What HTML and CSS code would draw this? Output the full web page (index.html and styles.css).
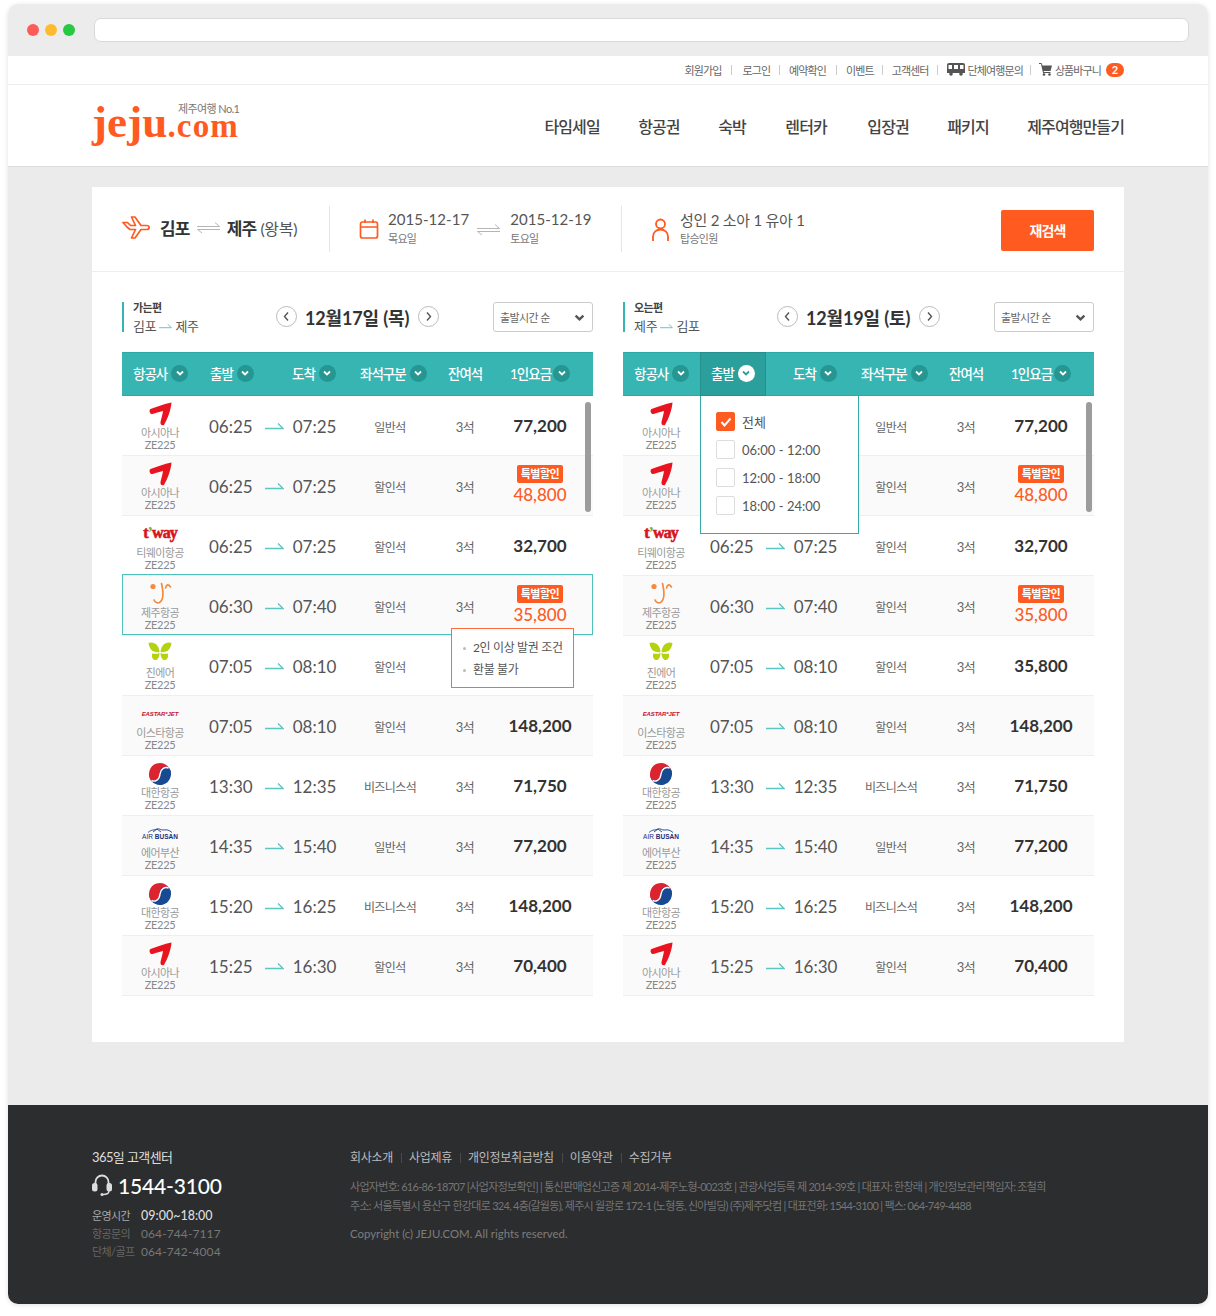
FILE: index.html
```html
<!DOCTYPE html>
<html lang="ko">
<head>
<meta charset="utf-8">
<title>제주닷컴 항공권</title>
<link rel="stylesheet" href="styles.css">
</head>
<body>
<svg class="defs" xmlns="http://www.w3.org/2000/svg">
<symbol id="asiana" viewBox="0 0 24 24"><path fill="#e8141f" d="M2.5 7C9 4.5 16 2 23.5 0.5C23 8 19.5 17 16 23C14 24 12 22.5 12.5 20C13.5 16 14.5 12.5 15 9C11 10 7.5 11 4.5 12C2 12.5 .5 8.5 2.5 7Z"/></symbol>
<symbol id="jejuair" viewBox="0 0 24 24"><circle cx="5" cy="4.5" r="2.6" fill="#f58a3c"/><path fill="none" stroke="#f58a3c" stroke-width="1.7" stroke-linecap="round" d="M13.5 1.500C15.500 10 15.500 18 11.500 20.500C9.500 21.500 7 20.500 6 18"/><path fill="none" stroke="#f58a3c" stroke-width="1.6" stroke-linecap="round" d="M17.500 6C18.500 2 20.500 2 22.500 5"/></symbol>
<symbol id="jinair" viewBox="0 0 24 24"><g fill="#b5d20f"><path d="M.5 1C6 -1 11 3 11.500 10C7 11 1.500 9 .5 1Z"/><path d="M4.500 11.500C7 12 10 12 11.500 11C11.500 15 9.500 18.500 7 18C4.500 17.500 3 14 4.500 11.500Z"/><path d="M23.500 1C18 -1 13 3 12.500 10C17 11 22.500 9 23.500 1Z"/><path d="M19.500 11.500C17 12 14 12 12.500 11C12.500 15 14.500 18.500 17 18C19.500 17.500 21 14 19.500 11.500Z"/></g></symbol>
<symbol id="koreanair" viewBox="0 0 24 24"><g transform="rotate(-18 12 12)"><path fill="#dc2430" d="M1 12A11 11 0 0 1 23 12Z"/><path fill="#164a93" d="M1 12A11 11 0 0 0 23 12Z"/><circle cx="6.500" cy="12" r="5.500" fill="#dc2430"/><circle cx="17.500" cy="12" r="5.500" fill="#164a93"/><path fill="none" stroke="#fff" stroke-width="1.400" d="M2 15.500C4 18 9.500 18 12 12C14.500 7 19 6.500 22 9"/></g></symbol>
<symbol id="busanwave" viewBox="0 0 24 6"><path fill="none" stroke="#1d3f8f" stroke-width=".9" d="M0 5.500C4 2 6 3.500 9 2C11 1 13 3.500 16 3C19 2.500 21 3 24 5.500M5 5L9 2L13 5"/></symbol>
<symbol id="arr" viewBox="0 0 19 8"><path fill="none" stroke="#5cc6c2" stroke-width="1.400" d="M0 6.500H18L13 1.500"/></symbol>
<symbol id="dbl" viewBox="0 0 23 11"><path fill="none" stroke="#b5b5b5" d="M0 4.500H22.500L18 .5M23 7.500H.5L5 11"/></symbol>
<symbol id="chev" viewBox="0 0 10 10"><path fill="none" stroke="currentColor" stroke-width="1.800" d="M2 3.500L5 6.500L8 3.500"/></symbol>
<symbol id="prev" viewBox="0 0 19 19"><path fill="none" stroke="#555" stroke-width="1.400" d="M11 5.500L7.500 9.500L11 13.500"/></symbol>
<symbol id="next" viewBox="0 0 19 19"><path fill="none" stroke="#555" stroke-width="1.400" d="M8 5.500L11.500 9.500L8 13.500"/></symbol>
</svg>

<div class="window">
  <div class="chrome">
    <i class="dot red"></i><i class="dot yellow"></i><i class="dot green"></i>
    <div class="address"></div>
  </div>

  <div class="topbar">
    <a>회원가입</a><b></b><a>로그인</a><b></b><a>예약확인</a><b></b><a>이벤트</a><b></b><a>고객센터</a><b></b>
    <a class="ico"><svg width="18" height="13" viewBox="0 0 18 13"><path fill="#555" d="M2 0H16A2 2 0 0 1 18 2V10H0V2A2 2 0 0 1 2 0Z"/><path fill="#fff" d="M1.500 2H5V6H1.500ZM7 2H11V6H7ZM13 2H16.500V6H13Z"/><circle cx="4" cy="11" r="1.800" fill="#555"/><circle cx="14" cy="11" r="1.800" fill="#555"/></svg>단체여행문의</a><b></b>
    <a class="ico"><svg width="13" height="13" viewBox="0 0 13 13"><path fill="#555" d="M0 0H2.500L3.500 2.500H13L11.500 8H4.500L5 9H11.500V10H4L2 1H0Z"/><circle cx="5" cy="11.500" r="1.300" fill="#555"/><circle cx="10.500" cy="11.500" r="1.300" fill="#555"/></svg>상품바구니</a>
    <em class="count">2</em>
  </div>

  <header class="header">
    <div class="logo"><span class="tag">제주여행 No.1</span><span class="big">jeju</span><span class="small">.com</span></div>
    <nav class="nav"><a>타임세일</a><a>항공권</a><a>숙박</a><a>렌터카</a><a>입장권</a><a>패키지</a><a>제주여행만들기</a></nav>
  </header>

  <main class="content">
    <section class="card">
      <div class="summary">
        <div class="route">
          <svg class="plane" width="29" height="23" viewBox="0 0 29 23"><path fill="none" stroke="#ff5a1f" stroke-width="1.700" stroke-linejoin="round" d="M1 6.500H5.500L8.500 9.500H13.500L9.500 1H13L19 9.500H24.500C28 9.500 28 13.500 24.500 13.500H19L13 22H9.500L13.500 13.500H8L5 11Z"/></svg>
          <strong>김포</strong><svg class="dblarr" width="23" height="11"><use href="#dbl"/></svg><strong>제주</strong><span>(왕복)</span>
        </div>
        <div class="dates">
          <svg class="cal" width="20" height="20" viewBox="0 0 20 20"><path fill="none" stroke="#ff5a1f" stroke-width="1.700" d="M3.500 3H16.500A2 2 0 0 1 18.500 5V17A2 2 0 0 1 16.500 19H3.500A2 2 0 0 1 1.500 17V5A2 2 0 0 1 3.500 3ZM1.500 8H18.500M6 .5V4M14 .5V4"/></svg>
          <div class="stack"><p>2015-12-17</p><small>목요일</small></div>
          <svg class="dblarr2" width="23" height="11"><use href="#dbl"/></svg>
          <div class="stack"><p>2015-12-19</p><small>토요일</small></div>
        </div>
        <div class="pax">
          <svg width="17" height="23" viewBox="0 0 17 23"><g fill="none" stroke="#ff5a1f" stroke-width="1.800"><circle cx="8.500" cy="6" r="4.500"/><path d="M1 23V18.500C1 14 4.500 11.500 8.500 11.500C12.500 11.500 16 14 16 18.500V23"/></g></svg>
          <div class="stack"><p class="ko">성인 2 소아 1 유아 1</p><small>탑승인원</small></div>
        </div>
        <button class="research">재검색</button>
      </div>

      <div class="lists">
        <div class="list">
          <div class="subhead">
            <div class="dir"><b>가는편</b><span>김포 <svg width="13" height="8"><use href="#arr"/></svg> 제주</span></div>
            <div class="day"><i class="round"><svg width="19" height="19"><use href="#prev"/></svg></i><strong>12월17일 (목)</strong><i class="round"><svg width="19" height="19"><use href="#next"/></svg></i></div>
            <div class="sort">출발시간 순<svg width="13" height="13"><use href="#chev"/></svg></div>
          </div>
          <div class="thead">
            <div class="th c1">항공사<span class="cv"><svg width="10" height="10"><use href="#chev"/></svg></span></div>
            <div class="th c2">출발<span class="cv"><svg width="10" height="10"><use href="#chev"/></svg></span></div>
            <div class="th c3">도착<span class="cv"><svg width="10" height="10"><use href="#chev"/></svg></span></div>
            <div class="th c4">좌석구분<span class="cv"><svg width="10" height="10"><use href="#chev"/></svg></span></div>
            <div class="th c5">잔여석</div>
            <div class="th c6">1인요금<span class="cv"><svg width="10" height="10"><use href="#chev"/></svg></span></div>
          </div>
          <div class="tbody">
            <div class="row"><div class="al"><svg class="logo-i"><use href="#asiana"/></svg><span>아시아나</span><span>ZE225</span></div><div class="tm"><span>06:25</span><svg class="arr"><use href="#arr"/></svg><span>07:25</span></div><div class="st">일반석</div><div class="rm">3석</div><div class="pr">77,200</div></div>
            <div class="row"><div class="al"><svg class="logo-i"><use href="#asiana"/></svg><span>아시아나</span><span>ZE225</span></div><div class="tm"><span>06:25</span><svg class="arr"><use href="#arr"/></svg><span>07:25</span></div><div class="st">할인석</div><div class="rm">3석</div><div class="pr sale"><em>특별할인</em>48,800</div></div>
            <div class="row"><div class="al"><div class="logo-t tway">t<u>’</u>way</div><span>티웨이항공</span><span>ZE225</span></div><div class="tm"><span>06:25</span><svg class="arr"><use href="#arr"/></svg><span>07:25</span></div><div class="st">할인석</div><div class="rm">3석</div><div class="pr">32,700</div></div>
            <div class="row selected"><div class="al"><svg class="logo-i"><use href="#jejuair"/></svg><span>제주항공</span><span>ZE225</span></div><div class="tm"><span>06:30</span><svg class="arr"><use href="#arr"/></svg><span>07:40</span></div><div class="st">할인석</div><div class="rm">3석</div><div class="pr sale"><em>특별할인</em>35,800</div></div>
            <div class="row"><div class="al"><svg class="logo-i"><use href="#jinair"/></svg><span>진에어</span><span>ZE225</span></div><div class="tm"><span>07:05</span><svg class="arr"><use href="#arr"/></svg><span>08:10</span></div><div class="st">할인석</div><div class="rm"></div><div class="pr"></div></div>
            <div class="row"><div class="al"><div class="logo-t eastar">EASTAR<u>*</u>JET</div><span>이스타항공</span><span>ZE225</span></div><div class="tm"><span>07:05</span><svg class="arr"><use href="#arr"/></svg><span>08:10</span></div><div class="st">할인석</div><div class="rm">3석</div><div class="pr">148,200</div></div>
            <div class="row"><div class="al"><svg class="logo-i"><use href="#koreanair"/></svg><span>대한항공</span><span>ZE225</span></div><div class="tm"><span>13:30</span><svg class="arr"><use href="#arr"/></svg><span>12:35</span></div><div class="st">비즈니스석</div><div class="rm">3석</div><div class="pr">71,750</div></div>
            <div class="row"><div class="al"><div class="logo-t busan"><svg width="24" height="6"><use href="#busanwave"/></svg><p>AIR <b>BUSAN</b></p></div><span>에어부산</span><span>ZE225</span></div><div class="tm"><span>14:35</span><svg class="arr"><use href="#arr"/></svg><span>15:40</span></div><div class="st">일반석</div><div class="rm">3석</div><div class="pr">77,200</div></div>
            <div class="row"><div class="al"><svg class="logo-i"><use href="#koreanair"/></svg><span>대한항공</span><span>ZE225</span></div><div class="tm"><span>15:20</span><svg class="arr"><use href="#arr"/></svg><span>16:25</span></div><div class="st">비즈니스석</div><div class="rm">3석</div><div class="pr">148,200</div></div>
            <div class="row"><div class="al"><svg class="logo-i"><use href="#asiana"/></svg><span>아시아나</span><span>ZE225</span></div><div class="tm"><span>15:25</span><svg class="arr"><use href="#arr"/></svg><span>16:30</span></div><div class="st">할인석</div><div class="rm">3석</div><div class="pr">70,400</div></div>
            <i class="scroll"></i>
            <ul class="tip"><li>2인 이상 발권 조건</li><li>환불 불가</li></ul>
          </div>
        </div>

        <div class="list">
          <div class="subhead">
            <div class="dir"><b>오는편</b><span>제주 <svg width="13" height="8"><use href="#arr"/></svg> 김포</span></div>
            <div class="day"><i class="round"><svg width="19" height="19"><use href="#prev"/></svg></i><strong>12월19일 (토)</strong><i class="round"><svg width="19" height="19"><use href="#next"/></svg></i></div>
            <div class="sort">출발시간 순<svg width="13" height="13"><use href="#chev"/></svg></div>
          </div>
          <div class="thead">
            <div class="th c1">항공사<span class="cv"><svg width="10" height="10"><use href="#chev"/></svg></span></div>
            <div class="th c2 active">출발<span class="cv"><svg width="10" height="10"><use href="#chev"/></svg></span></div>
            <div class="th c3">도착<span class="cv"><svg width="10" height="10"><use href="#chev"/></svg></span></div>
            <div class="th c4">좌석구분<span class="cv"><svg width="10" height="10"><use href="#chev"/></svg></span></div>
            <div class="th c5">잔여석</div>
            <div class="th c6">1인요금<span class="cv"><svg width="10" height="10"><use href="#chev"/></svg></span></div>
          </div>
          <div class="tbody">
            <div class="row"><div class="al"><svg class="logo-i"><use href="#asiana"/></svg><span>아시아나</span><span>ZE225</span></div><div class="tm"></div><div class="st">일반석</div><div class="rm">3석</div><div class="pr">77,200</div></div>
            <div class="row"><div class="al"><svg class="logo-i"><use href="#asiana"/></svg><span>아시아나</span><span>ZE225</span></div><div class="tm"></div><div class="st">할인석</div><div class="rm">3석</div><div class="pr sale"><em>특별할인</em>48,800</div></div>
            <div class="row"><div class="al"><div class="logo-t tway">t<u>’</u>way</div><span>티웨이항공</span><span>ZE225</span></div><div class="tm"><span>06:25</span><svg class="arr"><use href="#arr"/></svg><span>07:25</span></div><div class="st">할인석</div><div class="rm">3석</div><div class="pr">32,700</div></div>
            <div class="row"><div class="al"><svg class="logo-i"><use href="#jejuair"/></svg><span>제주항공</span><span>ZE225</span></div><div class="tm"><span>06:30</span><svg class="arr"><use href="#arr"/></svg><span>07:40</span></div><div class="st">할인석</div><div class="rm">3석</div><div class="pr sale"><em>특별할인</em>35,800</div></div>
            <div class="row"><div class="al"><svg class="logo-i"><use href="#jinair"/></svg><span>진에어</span><span>ZE225</span></div><div class="tm"><span>07:05</span><svg class="arr"><use href="#arr"/></svg><span>08:10</span></div><div class="st">할인석</div><div class="rm">3석</div><div class="pr">35,800</div></div>
            <div class="row"><div class="al"><div class="logo-t eastar">EASTAR<u>*</u>JET</div><span>이스타항공</span><span>ZE225</span></div><div class="tm"><span>07:05</span><svg class="arr"><use href="#arr"/></svg><span>08:10</span></div><div class="st">할인석</div><div class="rm">3석</div><div class="pr">148,200</div></div>
            <div class="row"><div class="al"><svg class="logo-i"><use href="#koreanair"/></svg><span>대한항공</span><span>ZE225</span></div><div class="tm"><span>13:30</span><svg class="arr"><use href="#arr"/></svg><span>12:35</span></div><div class="st">비즈니스석</div><div class="rm">3석</div><div class="pr">71,750</div></div>
            <div class="row"><div class="al"><div class="logo-t busan"><svg width="24" height="6"><use href="#busanwave"/></svg><p>AIR <b>BUSAN</b></p></div><span>에어부산</span><span>ZE225</span></div><div class="tm"><span>14:35</span><svg class="arr"><use href="#arr"/></svg><span>15:40</span></div><div class="st">일반석</div><div class="rm">3석</div><div class="pr">77,200</div></div>
            <div class="row"><div class="al"><svg class="logo-i"><use href="#koreanair"/></svg><span>대한항공</span><span>ZE225</span></div><div class="tm"><span>15:20</span><svg class="arr"><use href="#arr"/></svg><span>16:25</span></div><div class="st">비즈니스석</div><div class="rm">3석</div><div class="pr">148,200</div></div>
            <div class="row"><div class="al"><svg class="logo-i"><use href="#asiana"/></svg><span>아시아나</span><span>ZE225</span></div><div class="tm"><span>15:25</span><svg class="arr"><use href="#arr"/></svg><span>16:30</span></div><div class="st">할인석</div><div class="rm">3석</div><div class="pr">70,400</div></div>
            <i class="scroll"></i>
            <div class="filter">
              <label><i class="box on"><svg width="12" height="12" viewBox="0 0 12 12"><path fill="none" stroke="#fff" stroke-width="2" d="M1.500 6L4.500 9.500L10.500 2.500"/></svg></i>전체</label>
              <label><i class="box"></i>06:00 - 12:00</label>
              <label><i class="box"></i>12:00 - 18:00</label>
              <label><i class="box"></i>18:00 - 24:00</label>
            </div>
          </div>
        </div>
      </div>
    </section>
  </main>

  <footer class="footer">
    <div class="center">
      <p class="ctitle">365일 고객센터</p>
      <p class="phone"><svg width="20" height="22" viewBox="0 0 20 22"><path fill="none" stroke="#ddd" stroke-width="1.800" d="M3.500 10V8A6.500 6.500 0 0 1 16.500 8V10"/><rect x="0" y="9" width="5.500" height="8.500" rx="2.500" fill="#ddd"/><rect x="14.500" y="9" width="5.500" height="8.500" rx="2.500" fill="#ddd"/><path fill="none" stroke="#ddd" stroke-width="1.400" d="M17 17C17 20 14 20.500 11 20.500"/><circle cx="10" cy="20.500" r="1.500" fill="#ddd"/></svg>1544-3100</p>
      <dl class="hours"><dt>운영시간</dt><dd class="hi">09:00~18:00</dd><dt class="dim">항공문의</dt><dd>064-744-7117</dd><dt class="dim">단체/골프</dt><dd>064-742-4004</dd></dl>
    </div>
    <div class="info">
      <div class="flinks"><a>회사소개</a><a>사업제휴</a><a>개인정보취급방침</a><a>이용약관</a><a>수집거부</a></div>
      <p>사업자번호: 616-86-18707 [사업자정보확인] | 통신판매업신고증 제 2014-제주노형-0023호 | 관광사업등록 제 2014-39호 | 대표자: 한창래 | 개인정보관리책임자: 조철희</p>
      <p>주소: 서울특별시 용산구 한강대로 324, 4층(갈월동), 제주시 월광로 172-1 (노형동, 신아빌딩) (주)제주닷컴 | 대표전화: 1544-3100 | 팩스: 064-749-4488</p>
      <p class="copy">Copyright (c) JEJU.COM. All rights reserved.</p>
    </div>
  </footer>
</div>
</body>
</html>
```
FILE: styles.css
```css
* { box-sizing: border-box; margin: 0; padding: 0; }
html, body { background: #fff; }
body {
  padding: 4px 8px 12px;
  font-family: Lato, "Noto Sans CJK KR", sans-serif;
  color: #555;
}
a { color: inherit; text-decoration: none; }
i, em { font-style: normal; }
.defs { display: none; }

.window {
  height: 1300px;
  border-radius: 10px;
  overflow: hidden;
  box-shadow: 0 1px 5px rgba(0,0,0,.12);
  display: flex;
  flex-direction: column;
}
.chrome {
  height: 52px;
  background: #ececec;
  display: flex;
  align-items: center;
  padding: 0 19px;
  gap: 6px;
}
.dot { width: 12px; height: 12px; border-radius: 50%; }
.red { background: #fc5b57; }
.yellow { background: #ffbb2e; }
.green { background: #28c840; }
.address {
  flex: 1;
  height: 24px;
  margin-left: 13px;
  background: #fff;
  border: 1px solid #d9d9d9;
  border-radius: 7px;
}

.topbar {
  height: 29px;
  flex: none;
  background: #fff;
  border-bottom: 1px solid #eee;
  display: flex;
  align-items: center;
  justify-content: flex-end;
  padding: 0 84px 1px 0;
  font-size: 11px;
  letter-spacing: -.9px;
  color: #666;
}
.topbar b { width: 1px; height: 10px; background: #ccc; margin: 0 8.500px; }
.topbar b:nth-of-type(1) { margin: 0 10px; }
.topbar b:nth-of-type(2) { margin: 0 9px; }
.topbar b:nth-of-type(3) { margin: 0 9.500px; }
.topbar b:nth-of-type(6) { margin: 0 7.500px; }
.ico { display: flex; align-items: center; gap: 3px; }
.count {
  width: 18px;
  height: 14px;
  margin-left: 5px;
  border-radius: 7px;
  background: #ff5a1f;
  color: #fff;
  font-weight: 700;
  font-size: 11px;
  line-height: 14px;
  letter-spacing: 0;
  text-align: center;
}

.header {
  height: 82px;
  flex: none;
  background: #fff;
  border-bottom: 1px solid #dcdcdc;
  display: flex;
  align-items: center;
  justify-content: space-between;
  padding: 0 84px;
}
.logo {
  position: relative;
  display: flex;
  align-items: baseline;
  font-family: "Liberation Serif", serif;
  font-weight: 700;
  color: #ff5a1f;
  width: 150px;
  height: 50px;
  line-height: 50px;
  margin-top: -8px;
}
.big { font-size: 45px; letter-spacing: .1px; }
.small { font-size: 33px; letter-spacing: 1.200px; line-height: 20px; }
.tag {
  position: absolute;
  left: 86px;
  top: 6px;
  font: 400 11px/12px Lato, "Noto Sans CJK KR", sans-serif;
  letter-spacing: -.6px;
  color: #777;
}
.nav { display: flex; gap: 38.500px; font-size: 16px; font-weight: 500; letter-spacing: -.9px; color: #444; }
.nav a:nth-child(4) { margin-left: 1px; }
.nav a:nth-child(5) { margin-left: 2px; }

.content {
  flex: 1;
  background: #ebebeb;
  padding: 20px 84px 63px;
}
.card { background: #fff; height: 855px; }

.summary {
  height: 85px;
  border-bottom: 1px solid #eee;
  display: flex;
  align-items: center;
  padding: 0 30px;
}
.route {
  width: 208px;
  height: 46px;
  border-right: 1px solid #e5e5e5;
  display: flex;
  align-items: center;
  padding-bottom: 3px;
  font-size: 16px;
  letter-spacing: -.8px;
  color: #555;
}
.route strong { font-size: 17px; font-weight: 700; color: #333; }
.plane { margin-right: 9px; }
.dblarr { margin: 0 7px; }
.route span { margin-left: 4px; letter-spacing: -.3px; }
.dates {
  width: 292px;
  height: 46px;
  border-right: 1px solid #e5e5e5;
  display: flex;
  align-items: center;
  padding-left: 29px;
}
.cal { margin-right: 9px; }
.dblarr2 { margin: 0 10px 0 8px; }
.stack p { font-size: 15px; line-height: 19px; color: #555; letter-spacing: .05px; margin-top: -2px; padding-bottom: 2px; }
.stack p.ko { letter-spacing: -.25px; margin-top: 0; padding-bottom: 1px; }
.stack small { display: block; font-size: 11px; line-height: 16px; letter-spacing: -.7px; color: #777; }
.pax { display: flex; align-items: center; gap: 11px; padding-left: 30px; }
.research {
  margin: 2px 0 0 auto;
  width: 93px;
  height: 41px;
  border: 0;
  border-radius: 2px;
  background: #ff5a1f;
  color: #fff;
  font: 700 14px "Noto Sans CJK KR", sans-serif;
  letter-spacing: -.9px;
}

.lists { display: flex; gap: 30px; padding: 30px 30px 0; }
.list { width: 471px; }
.subhead { height: 30px; display: flex; align-items: center; margin-bottom: 20px; }
.dir {
  width: 154px;
  height: 30px;
  border-left: 2px solid #37b5b3;
  padding-left: 9px;
  display: flex;
  flex-direction: column;
  letter-spacing: -.6px;
}
.dir b { font-size: 11px; line-height: 11px; font-weight: 700; color: #444; }
.dir span { font-size: 13px; line-height: 18px; margin-top: 4px; letter-spacing: -.3px; color: #555; white-space: nowrap; }
.dir svg { vertical-align: 1px; }
.day { display: flex; align-items: center; width: 217px; margin-top: -1px; }
.day strong { font-size: 18px; font-weight: 700; color: #333; letter-spacing: -.15px; width: 121px; padding-left: 8px; white-space: nowrap; }
.round {
  width: 21px;
  height: 21px;
  flex: none;
  border: 1px solid #bbb;
  border-radius: 50%;
}
.round svg { display: block; }
.sort {
  width: 100px;
  height: 30px;
  margin-left: auto;
  border: 1px solid #ccc;
  border-radius: 3px;
  display: flex;
  align-items: center;
  justify-content: space-between;
  padding: 0 6px;
  font-size: 11px;
  letter-spacing: -.6px;
  color: #666;
}
.sort svg { color: #555; }

.thead {
  height: 44px;
  display: flex;
  background: #37b5b3;
  border-top: 1px solid #2ea9a7;
  border-bottom: 1px solid #2ea9a7;
}
.th {
  height: 42px;
  display: flex;
  align-items: center;
  gap: 4px;
  padding-bottom: 2px;
  color: #fff;
  font-size: 13.500px;
  font-weight: 500;
  letter-spacing: -1px;
  white-space: nowrap;
}
.c1 { width: 77px; padding-left: 11px; }
.c2 { width: 66px; padding-left: 11px; }
.c3 { width: 87px; padding-left: 27px; }
.c4 { width: 90px; padding-left: 8px; }
.c5 { width: 62px; padding-left: 6px; }
.c6 { flex: 1; padding-left: 6px; gap: 2px; }
.cv {
  width: 17px;
  height: 17px;
  border-radius: 50%;
  background: #259692;
  color: #fff;
  display: flex;
  align-items: center;
  justify-content: center;
}
.active {
  background: #2b9f9b;
  margin: -1px 0;
  height: 44px;
  border: 1px solid #26908c;
  padding-left: 10px;
}
.active .cv { background: #fff; color: #2b9f9b; }

.tbody { position: relative; }
.row {
  position: relative;
  height: 60px;
  display: grid;
  grid-template-columns: 76px 158px 70px 78px 72px;
  align-items: center;
  border-bottom: 1px solid #eee;
}
.row:nth-child(even) { background: #fafafa; }
.selected::after {
  content: "";
  position: absolute;
  inset: -2px 0 0;
  border: 1px solid #4fc1bd;
  pointer-events: none;
}
.al {
  display: flex;
  flex-direction: column;
  align-items: center;
  align-self: start;
  padding-top: 6px;
  font-size: 11px;
  line-height: 12px;
  letter-spacing: -.6px;
  color: #999;
}
.al span:last-child { letter-spacing: -.3px; color: #888; }
.logo-i { width: 24px; height: 24px; margin-bottom: 1px; display: block; }
.logo-t {
  height: 24px;
  margin-bottom: 1px;
  display: flex;
  flex-direction: column;
  align-items: center;
  justify-content: center;
  letter-spacing: 0;
}
.logo-t u { text-decoration: none; }
.tway {
  display: block;
  font: 700 16px/22px "Liberation Serif", serif;
  color: #d8141e;
  letter-spacing: -.9px;
  -webkit-text-stroke: .6px #d8141e;
}
.tway u { color: #6db33f; -webkit-text-stroke: 0; }
.eastar { display: block; font: italic 700 6px/24px "Liberation Sans", sans-serif; color: #c8102e; letter-spacing: -.1px; }
.busan svg { display: block; }
.busan p { font: 400 6.500px/8px "Liberation Sans", sans-serif; color: #1a2f7c; letter-spacing: 0; white-space: nowrap; }
.busan b { font-weight: 700; }
.tm {
  display: flex;
  align-items: center;
  padding: 2px 0 0 11px;
  font-size: 17px;
  color: #555;
}
.arr { width: 19px; height: 8px; margin: -2px 9px 0 12px; }
.st { text-align: center; font-size: 12px; letter-spacing: -.6px; color: #666; padding: 2px 2px 0 0; }
.rm { text-align: center; font-size: 13px; letter-spacing: -.6px; color: #666; padding-top: 2px; }
.pr {
  text-align: center;
  font-size: 17px;
  font-weight: 700;
  color: #333;
  white-space: nowrap;
}
.sale {
  display: flex;
  flex-direction: column;
  align-items: center;
  gap: 1px;
  font-weight: 500;
  color: #ff5a1f;
  line-height: 22px;
}
.sale em {
  width: 46px;
  height: 18px;
  border-radius: 2px;
  background: #ff5a1f;
  color: #fff;
  font-size: 11px;
  font-weight: 700;
  line-height: 18px;
  letter-spacing: -.5px;
}
.scroll {
  position: absolute;
  right: 2px;
  top: 6px;
  width: 6px;
  height: 110px;
  border-radius: 3px;
  background: #9c9c9c;
}
.tip {
  position: absolute;
  left: 329px;
  top: 232px;
  width: 123px;
  height: 60px;
  background: #fff;
  border: 1px solid #ff6a3a;
  list-style: none;
  padding: 8px 0 0 21px;
  font-size: 12px;
  line-height: 22px;
  letter-spacing: -.35px;
  color: #555;
}
.tip li { position: relative; white-space: nowrap; }
.tip li::before {
  content: "";
  position: absolute;
  left: -10px;
  top: 10px;
  width: 3px;
  height: 3px;
  border-radius: 50%;
  background: #bbb;
}
.filter {
  position: absolute;
  left: 77px;
  top: 0;
  width: 159px;
  height: 138px;
  background: #fff;
  border: 1px solid #35aaa7;
  border-top: 0;
  padding: 16px 0 0 15px;
  display: flex;
  flex-direction: column;
  gap: 9px;
}
.filter label {
  height: 19px;
  display: flex;
  align-items: center;
  gap: 7px;
  font-size: 13px;
  color: #555;
  letter-spacing: 0;
}
.box {
  width: 19px;
  height: 19px;
  border: 1px solid #ddd;
  border-radius: 2px;
  background: #fff;
  display: flex;
  align-items: center;
  justify-content: center;
}
.box.on { background: #ff5a1f; border-color: #ff5a1f; }

.footer {
  height: 199px;
  flex: none;
  background: #2c2d2f;
  display: flex;
  padding: 44px 84px 0;
}
.center { width: 258px; }
.ctitle { font-size: 13px; line-height: 16px; letter-spacing: -.6px; color: #ddd; }
.phone {
  display: flex;
  align-items: center;
  gap: 6px;
  margin-top: 7px;
  height: 26px;
  font-size: 21px;
  font-weight: 500;
  letter-spacing: -.15px;
  color: #fff;
}
.hours {
  display: grid;
  grid-template-columns: 49px auto;
  justify-content: start;
  align-items: center;
  margin-top: 9px;
  line-height: 18px;
}
.hours dt { font-size: 11px; letter-spacing: -.6px; color: #aaa; white-space: nowrap; }
.hours dt.dim { color: #666; }
.hours dd { font-size: 12px; letter-spacing: .1px; color: #777; }
.hours dd.hi { font-size: 12.500px; color: #ddd; font-weight: 500; letter-spacing: 0; }
.info { font-size: 11px; letter-spacing: -.71px; color: #757575; line-height: 19px; }
.flinks { display: flex; font-size: 12px; line-height: 16px; letter-spacing: -.3px; color: #bbb; margin: 1px 0 11px; }
.flinks a + a { margin-left: 8px; padding-left: 8px; position: relative; }
.flinks a + a::before {
  content: "";
  position: absolute;
  left: 0;
  top: 3px;
  width: 1px;
  height: 10px;
  background: #4a4a4a;
}
.copy { font-size: 11.400px; letter-spacing: 0; margin-top: 9px; color: #7d7d7d; }
```
